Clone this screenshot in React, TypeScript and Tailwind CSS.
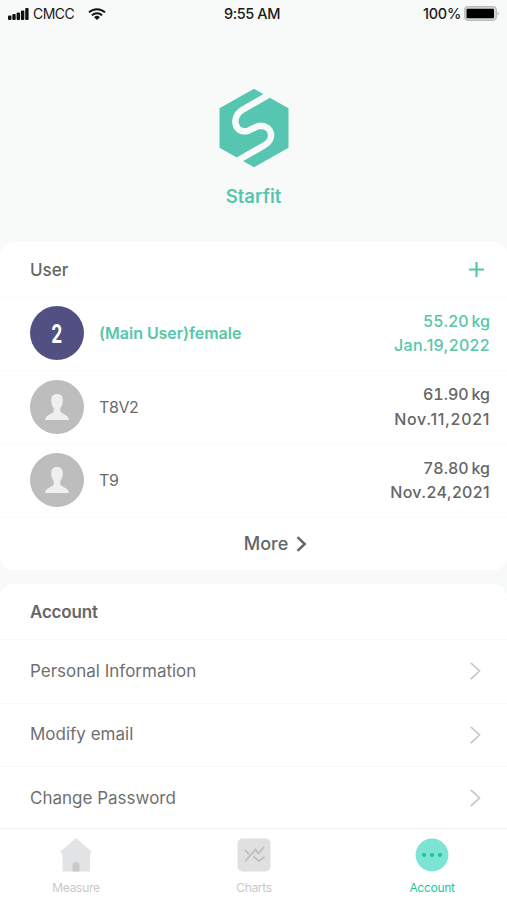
import type { ReactNode } from 'react';

type Member = {
  name: string;
  weight: string;
  date: string;
  dateSpacing: string;
  badge?: string;
};

const members: Member[] = [
  { name: '(Main User)female', weight: '55.20', date: 'Jan.19,2022', dateSpacing: 'tracking-[0.33px]', badge: '2' },
  { name: 'T8V2', weight: '61.90', date: 'Nov.11,2021', dateSpacing: 'tracking-[0.68px]' },
  { name: 'T9', weight: '78.80', date: 'Nov.24,2021', dateSpacing: 'tracking-[0.35px]' },
];

const accountItems = ['Personal Information', 'Modify email', 'Change Password'];

function StatusBar() {
  return (
    <header className="grid h-[27px] grid-cols-3 items-center pr-[7px] pl-2 text-[14.5px] font-medium text-[#1b1b1b]">
      <div className="flex items-center">
        <svg width="21" height="12" viewBox="0 0 21 12" fill="#111">
          <rect x="0" y="7.5" width="3.4" height="4.5" rx="1" />
          <rect x="4.3" y="6" width="3.4" height="6" rx="1" />
          <rect x="8.6" y="4.5" width="3.4" height="7.5" rx="1" />
          <rect x="12.9" y="2.5" width="3.4" height="9.5" rx="1" />
          <rect x="17.2" y="0" width="3.4" height="12" rx="1" />
        </svg>
        <span className="ml-1 w-[42px] text-[14px] font-normal tracking-[-0.5px]">CMCC</span>
        <svg className="ml-[13px]" width="18" height="12" viewBox="0 0 18 12" fill="none" stroke="#111" strokeWidth="2">
          <path d="M1 4.4a11.5 11.5 0 0 1 16 0" />
          <path d="M3.9 7.4a7.3 7.3 0 0 1 10.2 0" />
          <path d="M9 12 6.1 9.2a4.2 4.2 0 0 1 5.8 0z" fill="#111" stroke="none" />
        </svg>
      </div>
      <span className="pr-1 text-center tracking-[-0.4px]">9:55 AM</span>
      <div className="flex items-center justify-end">
        <span className="tracking-[-0.3px]">100%</span>
        <svg className="ml-[3px]" width="36" height="15" viewBox="0 0 36 15">
          <rect x="0.7" y="0.7" width="31.6" height="13.6" rx="3.5" fill="#d6d7d7" stroke="#b9baba" strokeWidth="1.2" />
          <rect x="2.5" y="2.8" width="27.5" height="9.4" rx="1" fill="#000" />
          <path d="M33.5 5.5a2.2 2.2 0 0 1 0 4z" fill="#b9baba" />
        </svg>
      </div>
    </header>
  );
}

function Brand() {
  return (
    <div className="flex h-[215px] flex-col items-center pt-[61px]">
      <svg className="ml-px" width="70" height="80" viewBox="0 0 70 80">
        <path d="M35 .8 69.5 20.2v39.6L35 79.2.5 59.8V20.2z" fill="#57c6b1" />
        <path
          d="M51 6 24 21.5C11 29 16 46.5 29 42.8C34 41.2 36.500 37.800 42 37.800C53.500 38.500 56 51.500 45 57.500L18 73"
          fill="none"
          stroke="#f8faf9"
          strokeWidth="6.5"
        />
      </svg>
      <h1 className="mt-[15px] text-[18.5px] leading-[26px] font-semibold text-[#57c6b1]">Starfit</h1>
    </div>
  );
}

function Avatar({ badge }: { badge?: string }) {
  if (badge) {
    return (
      <div className="flex size-[54px] shrink-0 items-center justify-center rounded-full bg-[#525083]">
        <span className="scale-x-[0.7] pt-0.5 text-[25px] font-bold text-white">{badge}</span>
      </div>
    );
  }
  return (
    <div className="flex size-[54px] shrink-0 items-center justify-center rounded-full bg-[#bdbdbd]">
      <svg width="24" height="26" viewBox="0 0 24 26" fill="#efefef">
        <path d="M12 0c4 0 6.2 2.6 5.7 6.5 0 4-1.1 6-2.4 7.5v3.2c1 2.8 8.2 3.3 8.7 8.8H0c.5-5.5 7.7-6 8.7-8.8V14C7.4 12.5 6.3 10.5 6.3 6.5 5.8 2.6 8 0 12 0z" />
      </svg>
    </div>
  );
}

function MemberRow({ member }: { member: Member }) {
  const active = Boolean(member.badge);

  return (
    <li className="flex h-[73.5px] items-center border-t border-[#fafafa] pr-[17px] pb-px pl-[30px]">
      <Avatar badge={member.badge} />
      <span className={`ml-[15px] flex-1 text-[16px] ${active ? 'font-semibold tracking-[-0.04px] text-[#57c6a9]' : 'tracking-[-0.4px] text-[#6b6b6b]'}`}>
        {member.name}
      </span>
      <div className={`text-right text-[16px] leading-[24.5px] font-medium ${active ? 'text-[#57c6a9]' : 'text-[#666]'}`}>
        <p className="tabular-nums [word-spacing:-1.5px]">{member.weight} kg</p>
        <p className={member.dateSpacing}>{member.date}</p>
      </div>
    </li>
  );
}

function Chevron({ bold }: { bold?: boolean }) {
  return (
    <svg
      width="11"
      height={bold ? 16 : 18}
      viewBox={bold ? '0 0 11 16' : '0 0 11 18'}
      fill="none"
      stroke={bold ? '#666' : '#c7c7c7'}
      strokeWidth={bold ? 2.5 : 1.7}
    >
      <path d={bold ? 'M1.5 1.2 8.7 8l-7.2 6.8' : 'M.8.8 9.5 9 .8 17.2'} />
    </svg>
  );
}

function TabItem({ label, active, children }: { label: string; active?: boolean; children: ReactNode }) {
  return (
    <button type="button" className="flex w-[70px] flex-col items-center pt-[9px]">
      {children}
      <span className={`mt-2 text-[12px] leading-4 tracking-[-0.3px] ${active ? 'text-[#1bc8a4]' : 'text-[#c9c9c9]'}`}>{label}</span>
    </button>
  );
}

function TabBar() {
  return (
    <nav className="flex h-[72px] justify-between border-t border-[#f2f3f3] bg-white pr-10 pl-[41px]">
      <TabItem label="Measure">
        <svg width="34" height="34" viewBox="0 0 34 34">
          <path d="M17 0 33 14l-1.5 1.5H31v18H3.5v-18h-1L1 14z" fill="#e2e3e4" />
          <path d="M13.5 33.5v-6a3.5 3.5 0 0 1 7 0v6z" fill="#c8c9ca" />
        </svg>
      </TabItem>
      <TabItem label="Charts">
        <svg width="34" height="34" viewBox="0 0 34 34" fill="none">
          <rect x="0.5" y="0.5" width="33" height="33" rx="5" fill="#e0e0e0" />
          <g stroke="#bcbcbc" strokeWidth="1.7">
            <path d="m8 12 4 4.2" />
            <path d="M8 23.5 18.5 11.5 21.5 15.5 27 9" />
            <path d="m16.5 18.5 5.5 4.5 5.5-4" />
          </g>
        </svg>
      </TabItem>
      <TabItem label="Account" active>
        <svg width="34" height="34" viewBox="0 0 34 34">
          <circle cx="17" cy="17" r="16.4" fill="#7de3d2" />
          <g fill="#15c6a0">
            <circle cx="9" cy="17" r="2.1" />
            <circle cx="17" cy="17" r="2.1" />
            <circle cx="25" cy="17" r="2.1" />
          </g>
        </svg>
      </TabItem>
    </nav>
  );
}

export default function App() {
  return (
    <div className="flex h-[900px] w-[507px] flex-col overflow-hidden bg-[#f8faf9] font-['Inter',sans-serif]">
      <StatusBar />
      <Brand />

      <section className="h-[328px] shrink-0 rounded-[14px] bg-white">
        <div className="flex h-[54.5px] items-center justify-between pr-[23px] pl-[30px]">
          <h2 className="pt-0.5 text-[17px] font-medium text-[#666]">User</h2>
          <svg width="15" height="15" viewBox="0 0 15 15" stroke="#57c6a9" strokeWidth="2.2">
            <path d="M7.5 0v15M0 7.5h15" />
          </svg>
        </div>
        <ul>
          {members.map((member) => (
            <MemberRow key={member.name} member={member} />
          ))}
        </ul>
        <button type="button" className="flex h-[52px] w-full items-center justify-center gap-2 border-t border-[#fafafa] pl-11 text-[18px] font-medium text-[#666]">
          More
          <Chevron bold />
        </button>
      </section>

      <section className="mt-[14px] min-h-0 flex-1 rounded-t-[14px] bg-white">
        <h2 className="flex h-[55px] items-center pt-0.5 pl-[30px] text-[17px] font-semibold tracking-[-0.2px] text-[#666]">Account</h2>
        <ul>
          {accountItems.map((item) => (
            <li key={item} className="flex h-[63.5px] items-center justify-between border-t border-[#f8f8f8] pr-[26px] pl-[30px] text-[17px] text-[#707070]">
              {item}
              <Chevron />
            </li>
          ))}
        </ul>
      </section>

      <TabBar />
    </div>
  );
}
